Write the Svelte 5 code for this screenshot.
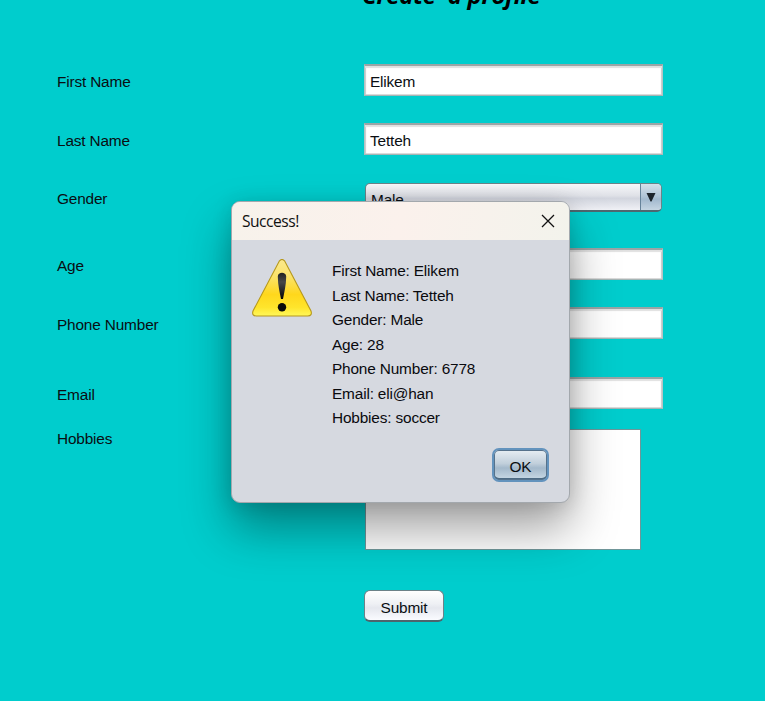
<script>
  const fields = [
    { label: 'First Name', value: 'Elikem', kind: 'text', gap: 0, height: 32 },
    { label: 'Last Name', value: 'Tetteh', kind: 'text', gap: 27, height: 32 },
    { label: 'Gender', value: 'Male', kind: 'select', gap: 28, height: 29 },
    { label: 'Age', value: '', kind: 'text', gap: 36, height: 32 },
    { label: 'Phone Number', value: '', kind: 'text', gap: 27, height: 32 },
    { label: 'Email', value: '', kind: 'text', gap: 38, height: 32 },
    { label: 'Hobbies', value: '', kind: 'area', gap: 20, height: 121 }
  ];
  const details = [
    'First Name: Elikem',
    'Last Name: Tetteh',
    'Gender: Male',
    'Age: 28',
    'Phone Number: 6778',
    'Email: eli@han',
    'Hobbies: soccer'
  ];
</script>

<main>
  <h1>Create&nbsp; a profile</h1>
  <form>
    {#each fields as f}
      <div class="row" style="height:{f.height}px;margin-top:{f.gap}px">
        <span class="label" class:top={f.kind === 'area'}>{f.label}</span>
        {#if f.kind === 'select'}
          <div class="select">
            <span>{f.value}</span>
            <i><svg width="10" height="9" viewBox="0 0 10 9"><path d="M.5 0H9.5L5.5 8.5H4.5Z" fill="#1c242c" /></svg></i>
          </div>
        {:else if f.kind === 'area'}
          <div class="area"></div>
        {:else}
          <div class="input">{f.value}</div>
        {/if}
      </div>
    {/each}
    <button type="button" class="submit">Submit</button>
  </form>

  <section class="dialog">
    <header>
      <span>Success!</span>
      <svg width="14" height="14" viewBox="0 0 14 14"><path d="M1 1L13 13M13 1L1 13" stroke="#111" stroke-width="1.25" /></svg>
    </header>
    <div class="body">
      <svg class="warn" width="60" height="59" viewBox="0 0 60 59">
        <defs>
          <linearGradient id="y" x1="0" y1="0" x2="0" y2="1">
            <stop offset="0" stop-color="#fbe98e" />
            <stop offset=".3" stop-color="#fbe36a" />
            <stop offset=".62" stop-color="#ffd71c" />
            <stop offset=".85" stop-color="#ffe52c" />
            <stop offset="1" stop-color="#fff85a" />
          </linearGradient>
          <linearGradient id="k" x1="0" y1="0" x2="0" y2="1">
            <stop offset="0" stop-color="#202020" />
            <stop offset=".35" stop-color="#484848" />
            <stop offset="1" stop-color="#050505" />
          </linearGradient>
        </defs>
        <path d="M27.2 2.2Q30 -1.4 32.8 2.2L59 52Q60.5 56.7 55.8 57H4.2Q-.5 56.7 1 52Z" fill="url(#y)" stroke="#b6981c" stroke-width="1.1" />
        <path d="M25.8 17.5C25.8 12.5 34.2 12.5 34.2 17.5C34.2 26 32.2 33.5 31 40H29C27.8 33.5 25.8 26 25.8 17.5Z" fill="url(#k)" />
        <circle cx="30" cy="48.3" r="4.2" fill="#0b0b0b" />
      </svg>
      <div class="details">
        {#each details as d}<p>{d}</p>{/each}
      </div>
    </div>
    <div class="actions"><button type="button" class="ok">OK</button></div>
  </section>
</main>

<style>
  :global(body) { margin: 0; background: #00cdcd; }
  main {
    position: relative;
    width: 765px;
    height: 701px;
    overflow: hidden;
    background: #00cdcd;
    color: #0a0e12;
    font: 15.4px/18px "Liberation Sans", Arial, sans-serif;
    letter-spacing: -.17px;
  }
  h1 {
    margin: -22px 0 0 362px;
    height: 86px;
    font: italic bold 24px/34px "Open Sans", "Noto Sans", sans-serif;
    letter-spacing: -.3px;
    color: #000;
    white-space: nowrap;
  }
  form { padding-left: 57px; }
  .row { display: flex; align-items: center; }
  .label { width: 307px; flex: none; padding-top: 3px; }
  .top { align-self: flex-start; padding-top: 1px; }
  .input {
    box-sizing: border-box;
    width: 299px;
    height: 32px;
    padding: 7px 5px 0;
    background: #fff;
    border: 1px solid #b4c4c4;
    border-top: 2px solid #9ba5a6;
    border-bottom-color: #a5b5b5;
    box-shadow: inset 0 2px 1px #e0e0e0, inset 1px 0 1px #c8c8c8, inset -1px 0 1px #c8c8c8, inset 0 -1px #dedede;
  }
  .select {
    box-sizing: border-box;
    display: flex;
    justify-content: space-between;
    width: 297px;
    height: 29px;
    margin-left: 1px;
    border: 1px solid #6b8388;
    border-bottom: 2px solid #4e6870;
    border-radius: 5px;
    overflow: hidden;
    background: linear-gradient(#f7f8fa, #dfe1e7 45%, #d2d5de 55%, #f0f1f6);
  }
  .select span { padding: 7px 0 0 5px; }
  .select i {
    display: flex;
    justify-content: center;
    width: 20px;
    padding-top: 9px;
    border-left: 1px solid #66839a;
    background: linear-gradient(#d5e1eb, #adc2d5 50%, #a2b9ce 58%, #c5d5e2);
  }
  .area {
    box-sizing: border-box;
    width: 276px;
    height: 121px;
    margin-left: 1px;
    background: #fff;
    border: 1px solid #6f9699;
  }
  button {
    display: block;
    box-sizing: border-box;
    padding: 4px 0 0;
    color: #0a0e12;
    font: inherit;
    letter-spacing: inherit;
  }
  .submit {
    width: 80px;
    height: 32px;
    margin: 40px 0 0 307px;
    border: 1px solid #6c8288;
    border-bottom: 2px solid #4d656d;
    border-radius: 6px;
    background: linear-gradient(#fff, #eef0f4 45%, #e5e7ee 58%, #fafbff);
  }
  .dialog {
    position: absolute;
    left: 231px;
    top: 201px;
    width: 339px;
    height: 302px;
    box-sizing: border-box;
    border-radius: 9px;
    border: 1px solid #a3a8ad;
    overflow: hidden;
    background: #d6d9e0;
    box-shadow: 0 26px 48px rgba(0, 0, 0, .37), 0 2px 20px rgba(0, 0, 0, .13);
  }
  header {
    display: flex;
    align-items: center;
    justify-content: space-between;
    box-sizing: border-box;
    height: 38px;
    padding: 0 14px 1px 10px;
    background: linear-gradient(100deg, #f7f2eb, #fbf1ec 50%, #f3f3ec);
    font: 15.6px/20px "Open Sans", "Noto Sans", sans-serif;
    color: #101010;
  }
  header span { letter-spacing: -.5px; }
  .body { display: flex; padding: 19px 0 0 20px; }
  .warn { flex: none; margin-right: 20px; }
  .details { color: #0a0a0e; margin-top: -1px; }
  p { margin: 0; height: 24.5px; line-height: 25px; white-space: nowrap; }
  .actions { display: flex; justify-content: flex-end; padding: 18px 20px 0 0; }
  .ok {
    width: 57px;
    height: 34px;
    border: 2px solid #6393bd;
    border-radius: 7px;
    background: linear-gradient(#e7eef3, #c1cfdb 45%, #a4b9cb 60%, #c9dae6);
    box-shadow: inset 0 0 0 1px #56728b, inset 0 -2px #4d6b84;
  }
</style>
